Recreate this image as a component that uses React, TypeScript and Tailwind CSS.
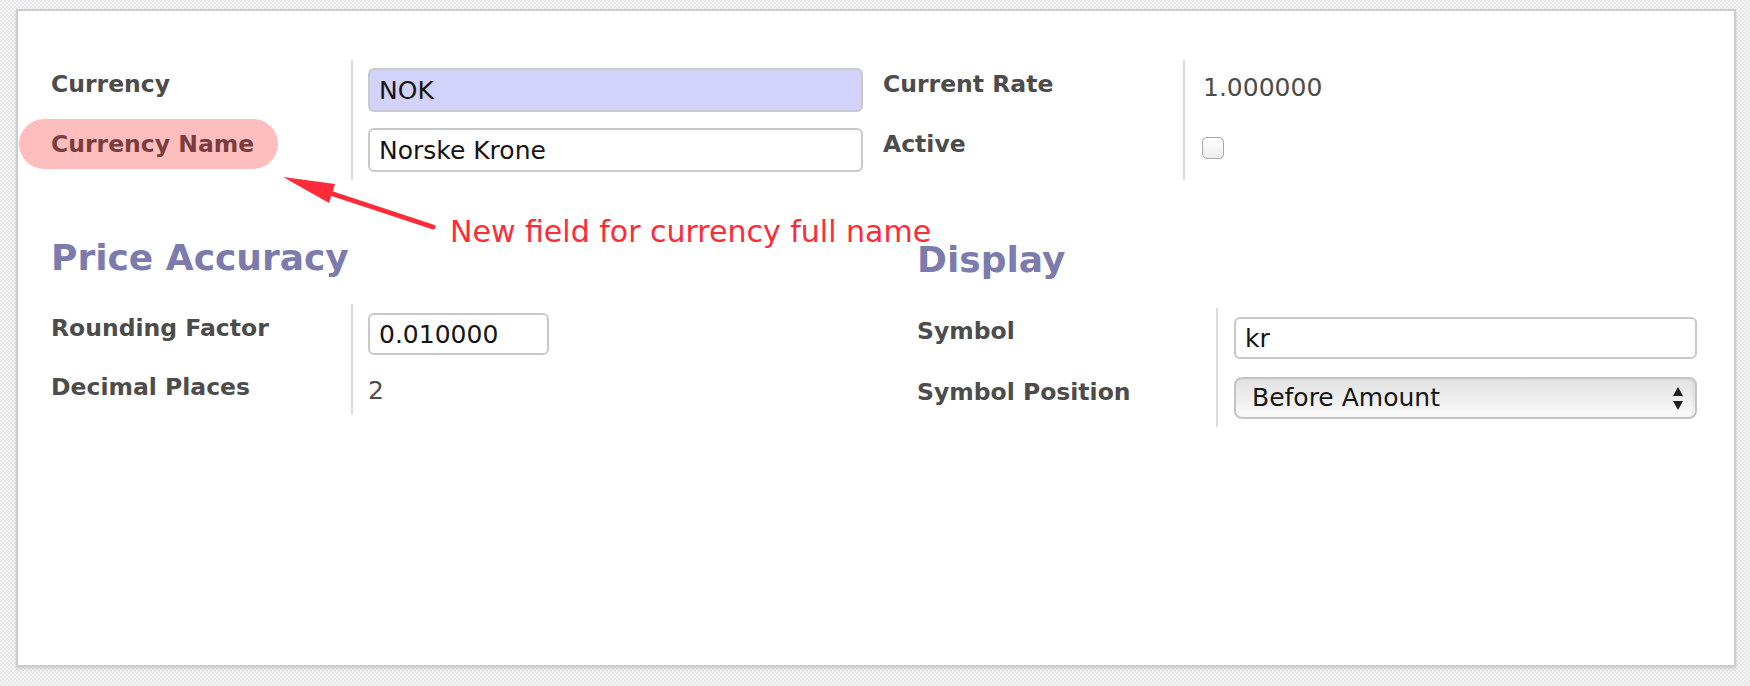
import React from "react";

const font = { fontFamily: '"DejaVu Sans", "Liberation Sans", sans-serif' };

function Label({ text, pt, className = "" }: { text: string; pt: string; className?: string }) {
	return (
		<div className={`${pt} text-[23.5px] leading-[28px] font-bold text-[#4c4c4c] whitespace-nowrap ${className}`}>
			{text}
		</div>
	);
}

function TextInput({ value, width, required = false }: { value: string; width: string; required?: boolean }) {
	return (
		<input
			readOnly
			value={value}
			className={`${width} h-[42px] rounded-[6px] border-2 border-[#c9c9c9] px-[9px] text-[25px] text-[#151515] outline-none ${
				required ? "bg-[#d2d2fa]" : "bg-white"
			}`}
			style={font}
		/>
	);
}

export default function App() {
	return (
		<div
			className="w-[1750px] h-[686px] pt-[9px] pl-[16px] bg-[#ededed] bg-[repeating-conic-gradient(#f3f3f3_0_25%,#e8e8e8_0_50%)] bg-[length:4px_4px]"
			style={font}
		>
			<div className="relative w-[1720px] h-[658px] border-2 border-[#cbcbd3] bg-white shadow-[0_2px_3px_rgba(0,0,0,0.12)]">
				{/* highlight blob behind "Currency Name" */}
				<div className="absolute left-[1px] top-[108px] w-[259px] h-[50px] rounded-full bg-[#ffbebe]" />

				<div className="relative pl-[33px] pt-[49px]">
					{/* top groups */}
					<div className="flex">
						<div className="grid grid-cols-[300px_512px] grid-rows-[60px_60px]">
							<Label text="Currency" pt="pt-[10px]" />
							<div className="border-l-2 border-[#dcdcdc] pl-[15px] pt-[8px]">
								<TextInput value="NOK" width="w-[495px] h-[44px]" required />
							</div>
							<Label text="Currency Name" pt="pt-[10px]" className="!text-[#7a3c3e]" />
							<div className="border-l-2 border-[#dcdcdc] pl-[15px] pt-[8px]">
								<TextInput value="Norske Krone" width="w-[495px] h-[44px]" />
							</div>
						</div>
						<div className="ml-[20px] grid grid-cols-[300px_300px] grid-rows-[60px_60px]">
							<Label text="Current Rate" pt="pt-[10px]" />
							<div className="border-l-2 border-[#dcdcdc] pl-[18px] pt-[14px] text-[25px] leading-[28px] text-[#4c4c4c]">
								1.000000
							</div>
							<Label text="Active" pt="pt-[10px]" />
							<div className="border-l-2 border-[#dcdcdc] pl-[17px] pt-[17px]">
								<div className="w-[22px] h-[22px] rounded-[5px] border border-[#a8a8a8] bg-gradient-to-b from-white to-[#ededed]" />
							</div>
						</div>
					</div>

					{/* bottom sections */}
					<div className="flex">
						<div className="w-[866px]">
							<h2 className="mt-[58px] text-[36px] leading-[40px] font-bold text-[#7c7bad]">Price Accuracy</h2>
							<div className="mt-[26px] grid grid-cols-[300px_300px] grid-rows-[60px_51px]">
								<Label text="Rounding Factor" pt="pt-[10px]" />
								<div className="border-l-2 border-[#dcdcdc] pl-[15px] pt-[9px]">
									<TextInput value="0.010000" width="w-[181px]" />
								</div>
								<Label text="Decimal Places" pt="pt-[9px]" />
								<div className="border-l-2 border-[#dcdcdc] pl-[15px] pt-[13px] text-[25px] leading-[28px] text-[#4c4c4c]">
									2
								</div>
							</div>
						</div>
						<div>
							<h2 className="mt-[60px] text-[36px] leading-[40px] font-bold text-[#7c7bad]">Display</h2>
							<div className="mt-[28px] grid grid-cols-[299px_481px] grid-rows-[60px_59px]">
								<Label text="Symbol" pt="pt-[9px]" />
								<div className="border-l-2 border-[#dcdcdc] pl-[16px] pt-[9px]">
									<TextInput value="kr" width="w-[463px]" />
								</div>
								<Label text="Symbol Position" pt="pt-[10px]" />
								<div className="border-l-2 border-[#dcdcdc] pl-[16px] pt-[9px]">
									<div className="flex w-[463px] h-[42px] items-center justify-between rounded-[8px] border-2 border-[#c4c4c4] bg-gradient-to-b from-[#e2e2e2] via-[#ededed] to-[#fbfbfb] pl-[16px] pr-[12px] shadow-[inset_-2px_0_3px_rgba(0,0,0,0.06)]">
										<span className="text-[25px] leading-[28px] text-[#151515]">Before Amount</span>
										<svg width="10" height="23" viewBox="0 0 10 23">
											<path d="M5 0 L10 9 L0 9 Z" fill="#1e1e1e" />
											<path d="M0 14 L10 14 L5 23 Z" fill="#1e1e1e" />
										</svg>
									</div>
								</div>
							</div>
						</div>
					</div>
				</div>

				{/* annotation */}
				<svg className="absolute left-0 top-0 pointer-events-none" width="1720" height="300">
					<line x1="312" y1="182" x2="415" y2="216" stroke="#ff2b38" strokeWidth="5" strokeLinecap="round" />
					<path d="M265 166 L317 173 L311 192 Z" fill="#ff2b38" />
				</svg>
				<div className="absolute left-[432px] top-[205px] text-[30px] leading-[32px] text-[#ff2b38] whitespace-nowrap">
					New field for currency full name
				</div>
			</div>
		</div>
	);
}
